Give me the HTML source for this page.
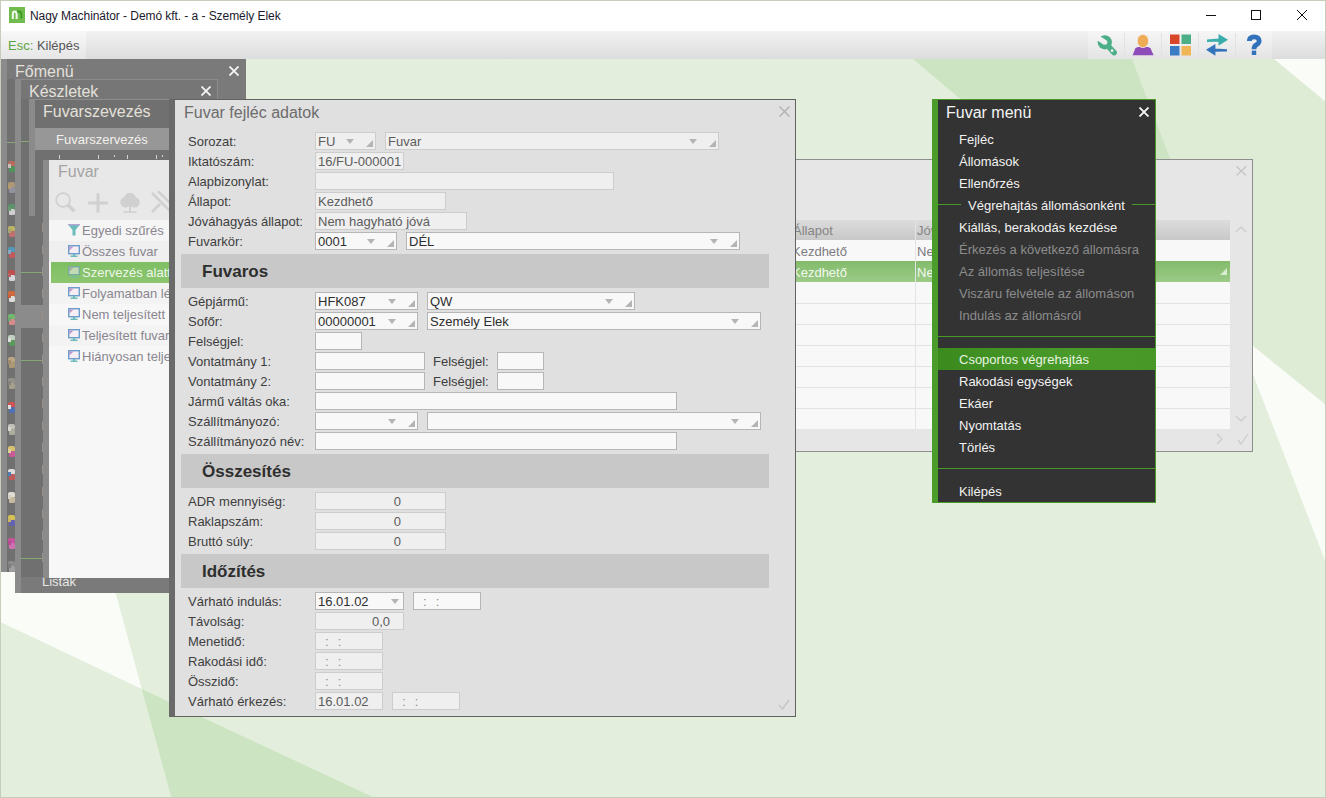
<!DOCTYPE html>
<html><head><meta charset="utf-8">
<style>
*{box-sizing:border-box;}
html,body{margin:0;padding:0;}
body{width:1326px;height:798px;position:relative;overflow:hidden;font-family:"Liberation Sans",sans-serif;background:#e2efdb;}
.a{position:absolute;}
.t{position:absolute;white-space:nowrap;line-height:1;}

.lb{position:absolute;white-space:nowrap;line-height:1;font-size:13px;color:#3e3e3e;}
.bx{position:absolute;height:18px;border:1px solid #cdcdcd;background:#efefef;color:#5c5c5c;font-size:13px;padding-left:2px;line-height:17px;white-space:nowrap;overflow:hidden;}
.en{border-color:#b6b6b6;background:#f8f8f8;color:#2e2e2e;}
.ar{position:absolute;top:6px;width:0;height:0;border-left:4.5px solid transparent;border-right:4.5px solid transparent;border-top:5px solid #b4b4b4;}
.gr{position:absolute;top:7px;width:0;height:0;border-left:7px solid transparent;border-bottom:7px solid #b4b4b4;}
.band{position:absolute;left:181px;width:588px;height:34px;background:#c8c8c8;}
.mi{position:absolute;white-space:nowrap;line-height:1;font-size:13px;}
.bt{position:absolute;white-space:nowrap;line-height:1;font-size:17px;font-weight:bold;color:#2e2e2e;}

</style></head><body>
<!-- BACKGROUND -->
<svg class="a" style="left:0;top:0" width="1326" height="798">
<rect x="0" y="0" width="1326" height="798" fill="#e3efdc"/>
<polygon points="1132,59 1326,59 1326,405 1237,333" fill="#deebd5"/>
<polygon points="913,59 1132,59 1237,333" fill="#cde4c2"/>
<polygon points="1274,59 1326,59 1326,102" fill="#fafcf8"/>
<polygon points="1237,333 1326,405 1326,563" fill="#fafcf8"/>
<polygon points="-4,154 141.8,689 0,621.7" fill="#fafcf8"/>
<polygon points="141.8,689 375,798 171.5,798" fill="#cde4c2"/>
</svg>

<!-- TITLE BAR -->
<div class="a" style="left:0;top:0;width:1326px;height:31px;background:#fff;"></div>
<div class="t" style="left:30px;top:10px;font-size:12px;color:#1a1a2e;letter-spacing:-0.06px;">Nagy Machinátor - Demó kft. - a - Személy Elek</div>

<!-- TOOLBAR -->
<div class="a" style="left:0;top:31px;width:1326px;height:28px;background:linear-gradient(#f2f2f2,#dcdcdc);"></div>
<div class="a" style="left:1px;top:31px;width:85px;height:28px;background:linear-gradient(#f8f8f8,#e6e6e6);"></div>
<div class="t" style="left:8px;top:39px;font-size:13px;color:#5aa341;">Esc:<span style="color:#555"> Kilépés</span></div>

<!-- LEFT STACK -->
<div class="a" style="left:1px;top:59px;width:245px;height:513px;background:#7a7a7a;"></div>
<div class="a" style="left:1px;top:59px;width:6px;height:513px;background:#8b8b8b;"></div>
<div class="a" style="left:7px;top:79px;width:8px;height:493px;background:#707070;"></div>
<div class="t" style="left:15px;top:64px;font-size:16px;color:#e4e0da;">Főmenü</div>
<svg class="a" style="left:229px;top:66px" width="10" height="10"><path d="M0.5 0.5L9.5 9.5M9.5 0.5L0.5 9.5" stroke="#f4f4f4" stroke-width="1.8"/></svg>
<!-- Keszletek -->
<div class="a" style="left:15px;top:79px;width:203px;height:514px;background:#767676;border-top:1px solid #8c8c8c;border-right:1px solid #8c8c8c;"></div>
<div class="a" style="left:15px;top:79px;width:6px;height:514px;background:#8b8b8b;"></div>
<div class="a" style="left:21px;top:99px;width:22px;height:478px;background:#707070;"></div>
<div class="t" style="left:29px;top:84px;font-size:16px;color:#e4e0da;">Készletek</div>
<svg class="a" style="left:201px;top:86px" width="10" height="10"><path d="M0.5 0.5L9.5 9.5M9.5 0.5L0.5 9.5" stroke="#f4f4f4" stroke-width="1.8"/></svg>
<!-- Fuvarszevezes -->
<div class="a" style="left:29px;top:99px;width:141px;height:117px;background:#707070;border-top:1px solid #8c8c8c;"></div>
<div class="a" style="left:29px;top:99px;width:6px;height:117px;background:#8b8b8b;"></div>
<div class="t" style="left:43px;top:104px;font-size:16px;color:#e4e0da;">Fuvarszevezés</div>
<div class="a" style="left:35px;top:128px;width:135px;height:22px;background:#979797;"></div>
<div class="t" style="left:56px;top:133px;font-size:13px;color:#f2f0ec;">Fuvarszervezés</div>
<div class="a" style="left:59px;top:155px;width:1px;height:4px;background:#d8d4d0;"></div><div class="a" style="left:98px;top:155px;width:1px;height:4px;background:#d8d4d0;"></div><div class="a" style="left:114px;top:155px;width:1px;height:2px;background:#d8d4d0;"></div><div class="a" style="left:127px;top:155px;width:1px;height:4px;background:#d8d4d0;"></div><div class="a" style="left:156px;top:155px;width:1px;height:4px;background:#d8d4d0;"></div><div class="a" style="left:162px;top:155px;width:1px;height:2px;background:#d8d4d0;"></div>
<!-- green lines -->
<div class="a" style="left:7px;top:142px;width:8px;height:1px;background:#86a874;"></div>
<div class="a" style="left:21px;top:141px;width:8px;height:1px;background:#86a874;"></div>
<div class="a" style="left:21px;top:272px;width:22px;height:1px;background:#86a874;"></div>
<div class="a" style="left:21px;top:360px;width:22px;height:1px;background:#86a874;"></div>
<div class="a" style="left:21px;top:558px;width:22px;height:1px;background:#86a874;"></div>
<div class="a" style="left:15px;top:305px;width:28px;height:23px;background:#8b8b8b;"></div>
<div class="a" style="left:42px;top:223px;width:1px;height:9px;background:#9a9088;"></div><div class="a" style="left:42px;top:245px;width:1px;height:9px;background:#9a9088;"></div><div class="a" style="left:42px;top:267px;width:1px;height:9px;background:#9a9088;"></div><div class="a" style="left:42px;top:289px;width:1px;height:9px;background:#9a9088;"></div><div class="a" style="left:42px;top:311px;width:1px;height:9px;background:#9a9088;"></div><div class="a" style="left:42px;top:333px;width:1px;height:9px;background:#9a9088;"></div><div class="a" style="left:42px;top:355px;width:1px;height:9px;background:#9a9088;"></div><div class="a" style="left:42px;top:377px;width:1px;height:9px;background:#9a9088;"></div><div class="a" style="left:42px;top:399px;width:1px;height:9px;background:#9a9088;"></div><div class="a" style="left:42px;top:421px;width:1px;height:9px;background:#9a9088;"></div><div class="a" style="left:42px;top:443px;width:1px;height:9px;background:#9a9088;"></div><div class="a" style="left:42px;top:465px;width:1px;height:9px;background:#9a9088;"></div><div class="a" style="left:42px;top:487px;width:1px;height:9px;background:#9a9088;"></div><div class="a" style="left:42px;top:509px;width:1px;height:9px;background:#9a9088;"></div><div class="a" style="left:42px;top:531px;width:1px;height:9px;background:#9a9088;"></div><div class="a" style="left:42px;top:553px;width:1px;height:9px;background:#9a9088;"></div>
<!-- icons strip -->
<svg class="a" style="left:7px;top:155px" width="8" height="420"><defs><filter id="bl"><feGaussianBlur stdDeviation="0.55"/></filter></defs><g filter="url(#bl)" opacity="0.85"><g transform="translate(0,5)"><rect x="1" y="1" width="7" height="6" fill="#c46a5a" rx="2"/><rect x="2" y="6" width="6" height="6" fill="#4c9a5a" rx="1.5"/><rect x="1" y="4" width="3" height="4" fill="#d8d0c8"/></g><g transform="translate(0,26)"><rect x="1" y="1" width="7" height="6" fill="#b8a078" rx="2"/><rect x="2" y="6" width="6" height="6" fill="#9a9aa8" rx="1.5"/><rect x="1" y="4" width="3" height="4" fill="#c0a070"/></g><g transform="translate(0,48)"><rect x="1" y="1" width="7" height="6" fill="#5a9a6a" rx="2"/><rect x="2" y="6" width="6" height="6" fill="#e0e0e0" rx="1.5"/><rect x="1" y="4" width="3" height="4" fill="#6aa070"/></g><g transform="translate(0,70)"><rect x="1" y="1" width="7" height="6" fill="#c8c060" rx="2"/><rect x="2" y="6" width="6" height="6" fill="#d07070" rx="1.5"/><rect x="1" y="4" width="3" height="4" fill="#b0b070"/></g><g transform="translate(0,91)"><rect x="1" y="1" width="7" height="6" fill="#50a0c8" rx="2"/><rect x="2" y="6" width="6" height="6" fill="#d05858" rx="1.5"/><rect x="1" y="4" width="3" height="4" fill="#88b0d0"/></g><g transform="translate(0,114)"><rect x="1" y="1" width="7" height="6" fill="#d04848" rx="2"/><rect x="2" y="6" width="6" height="6" fill="#e8e8f0" rx="1.5"/><rect x="1" y="4" width="3" height="4" fill="#c06060"/></g><g transform="translate(0,135)"><rect x="1" y="1" width="7" height="6" fill="#e06a38" rx="2"/><rect x="2" y="6" width="6" height="6" fill="#f0f0f0" rx="1.5"/><rect x="1" y="4" width="3" height="4" fill="#d86030"/></g><g transform="translate(0,158)"><rect x="1" y="1" width="7" height="6" fill="#70c870" rx="2"/><rect x="2" y="6" width="6" height="6" fill="#e89090" rx="1.5"/><rect x="1" y="4" width="3" height="4" fill="#70b070"/></g><g transform="translate(0,179)"><rect x="1" y="1" width="7" height="6" fill="#d0e0d0" rx="2"/><rect x="2" y="6" width="6" height="6" fill="#58a058" rx="1.5"/><rect x="1" y="4" width="3" height="4" fill="#f0f0f0"/></g><g transform="translate(0,201)"><rect x="1" y="1" width="7" height="6" fill="#c8b088" rx="2"/><rect x="2" y="6" width="6" height="6" fill="#b8a078" rx="1.5"/><rect x="1" y="4" width="3" height="4" fill="#a89070"/></g><g transform="translate(0,222)"><rect x="1" y="1" width="7" height="6" fill="#9a9a90" rx="2"/><rect x="2" y="6" width="6" height="6" fill="#b0a890" rx="1.5"/><rect x="1" y="4" width="3" height="4" fill="#888880"/></g><g transform="translate(0,246)"><rect x="1" y="1" width="7" height="6" fill="#e05050" rx="2"/><rect x="2" y="6" width="6" height="6" fill="#4a70c0" rx="1.5"/><rect x="1" y="4" width="3" height="4" fill="#f0f0f0"/></g><g transform="translate(0,268)"><rect x="1" y="1" width="7" height="6" fill="#d0d0c8" rx="2"/><rect x="2" y="6" width="6" height="6" fill="#b8b8a8" rx="1.5"/><rect x="1" y="4" width="3" height="4" fill="#e8e8e0"/></g><g transform="translate(0,290)"><rect x="1" y="1" width="7" height="6" fill="#e8d070" rx="2"/><rect x="2" y="6" width="6" height="6" fill="#d858a0" rx="1.5"/><rect x="1" y="4" width="3" height="4" fill="#f0e0a0"/></g><g transform="translate(0,313)"><rect x="1" y="1" width="7" height="6" fill="#f0f0f0" rx="2"/><rect x="2" y="6" width="6" height="6" fill="#d05858" rx="1.5"/><rect x="1" y="4" width="3" height="4" fill="#4a80c0"/></g><g transform="translate(0,336)"><rect x="1" y="1" width="7" height="6" fill="#f0f0e8" rx="2"/><rect x="2" y="6" width="6" height="6" fill="#d8c8a8" rx="1.5"/><rect x="1" y="4" width="3" height="4" fill="#e8e0d0"/></g><g transform="translate(0,359)"><rect x="1" y="1" width="7" height="6" fill="#e8d050" rx="2"/><rect x="2" y="6" width="6" height="6" fill="#6060c0" rx="1.5"/><rect x="1" y="4" width="3" height="4" fill="#e0c060"/></g><g transform="translate(0,382)"><rect x="1" y="1" width="7" height="6" fill="#d850a8" rx="2"/><rect x="2" y="6" width="6" height="6" fill="#e070c0" rx="1.5"/><rect x="1" y="4" width="3" height="4" fill="#c04898"/></g><g transform="translate(0,405)"><rect x="1" y="1" width="7" height="6" fill="#909090" rx="2"/><rect x="2" y="6" width="6" height="6" fill="#a8a8a8" rx="1.5"/><rect x="1" y="4" width="3" height="4" fill="#808080"/></g></g></svg>

<div class="a" style="left:21px;top:577px;width:148px;height:16px;background:#7a7a7a;"></div>
<div class="t" style="left:42px;top:575px;font-size:13px;color:#e8e8e8;">Listák</div>
<!-- Fuvar window -->
<div class="a" style="left:43px;top:160px;width:126px;height:418px;background:#8b8b8b;"></div>
<div class="a" style="left:49px;top:160px;width:120px;height:60px;background:#e8e8e8;"></div>
<div class="a" style="left:49px;top:220px;width:120px;height:358px;background:#f7f7f7;"></div>
<div class="t" style="left:58px;top:164px;font-size:16px;color:#a4a4a4;">Fuvar</div>
<svg class="a" style="left:55px;top:191px" width="114" height="24">
 <g fill="none" stroke="#d0d0d0">
  <circle cx="8.1" cy="9" r="6.9" stroke-width="1.7"/><path d="M13.3 14.3L19.3 20.3" stroke-width="3.6"/>
  <path d="M43 2.2V21.4M33.2 12H52.8" stroke-width="3"/>
  <path d="M97 2L116 21M103 0L116 13M97 21L105 13" stroke-width="2.6"/>
 </g>
 <g fill="#d0d0d0"><circle cx="75" cy="7.3" r="5.6"/><circle cx="70.5" cy="11.3" r="5.2"/><circle cx="79.5" cy="11.3" r="5.2"/><rect x="74" y="14" width="2" height="7"/><rect x="68.5" y="20.3" width="13" height="1.6"/></g>
</svg>
<div class="a" style="left:49px;top:220px;width:120px;height:21px;background:#f5f5f5;"></div>
<div class="a" style="left:49px;top:241px;width:120px;height:21px;background:#efefef;"></div>
<div class="a" style="left:51px;top:262px;width:118px;height:21px;background:linear-gradient(#7fbe63,#8cc670);"></div>
<div class="a" style="left:49px;top:283px;width:120px;height:21px;background:#f3f3f3;"></div>
<div class="a" style="left:49px;top:304px;width:120px;height:21px;background:#f7f7f7;"></div>
<div class="a" style="left:49px;top:325px;width:120px;height:21px;background:#f3f3f3;"></div>
<div class="t" style="left:82px;top:224px;font-size:13px;color:#8a8690;">Egyedi szűrés</div>
<div class="t" style="left:82px;top:245px;font-size:13px;color:#8a8690;">Összes fuvar</div>
<div class="t" style="left:82px;top:266px;font-size:13px;color:#eef6ea;">Szervezés alatt</div>
<div class="t" style="left:82px;top:287px;font-size:13px;color:#8a8690;">Folyamatban lévő</div>
<div class="t" style="left:82px;top:308px;font-size:13px;color:#8a8690;">Nem teljesített</div>
<div class="t" style="left:82px;top:329px;font-size:13px;color:#8a8690;">Teljesített fuvarok</div>
<div class="t" style="left:82px;top:350px;font-size:13px;color:#8a8690;">Hiányosan teljesített</div>
<svg class="a" style="left:66px;top:222px" width="16" height="140"><path d="M2 2.5H14L9.5 8V13.5H6.5V8Z" fill="#6cbcbc"/><rect x="2" y="2" width="12" height="1.3" fill="#b9a3d6"/><g transform="translate(0,22)" opacity="1"><rect x="2.7" y="1.7" width="10.6" height="8" fill="#f6eef4" stroke="#6d9dcb" stroke-width="1.4"/><path d="M3.4 2.4H7.5L3.4 6.5Z" fill="#b993c9"/><rect x="7" y="10" width="2" height="2" fill="#6cbcbc"/><rect x="4.5" y="11.5" width="7" height="1.5" fill="#6cbcbc"/></g><g transform="translate(0,43)" opacity="0.55"><rect x="2.7" y="1.7" width="10.6" height="8" fill="#f6eef4" stroke="#6d9dcb" stroke-width="1.4"/><path d="M3.4 2.4H7.5L3.4 6.5Z" fill="#b993c9"/><rect x="7" y="10" width="2" height="2" fill="#6cbcbc"/><rect x="4.5" y="11.5" width="7" height="1.5" fill="#6cbcbc"/></g><g transform="translate(0,64)" opacity="1"><rect x="2.7" y="1.7" width="10.6" height="8" fill="#f6eef4" stroke="#6d9dcb" stroke-width="1.4"/><path d="M3.4 2.4H7.5L3.4 6.5Z" fill="#b993c9"/><rect x="7" y="10" width="2" height="2" fill="#6cbcbc"/><rect x="4.5" y="11.5" width="7" height="1.5" fill="#6cbcbc"/></g><g transform="translate(0,85)" opacity="1"><rect x="2.7" y="1.7" width="10.6" height="8" fill="#f6eef4" stroke="#6d9dcb" stroke-width="1.4"/><path d="M3.4 2.4H7.5L3.4 6.5Z" fill="#b993c9"/><rect x="7" y="10" width="2" height="2" fill="#6cbcbc"/><rect x="4.5" y="11.5" width="7" height="1.5" fill="#6cbcbc"/></g><g transform="translate(0,106)" opacity="1"><rect x="2.7" y="1.7" width="10.6" height="8" fill="#f6eef4" stroke="#6d9dcb" stroke-width="1.4"/><path d="M3.4 2.4H7.5L3.4 6.5Z" fill="#b993c9"/><rect x="7" y="10" width="2" height="2" fill="#6cbcbc"/><rect x="4.5" y="11.5" width="7" height="1.5" fill="#6cbcbc"/></g><g transform="translate(0,127)" opacity="1"><rect x="2.7" y="1.7" width="10.6" height="8" fill="#f6eef4" stroke="#6d9dcb" stroke-width="1.4"/><path d="M3.4 2.4H7.5L3.4 6.5Z" fill="#b993c9"/><rect x="7" y="10" width="2" height="2" fill="#6cbcbc"/><rect x="4.5" y="11.5" width="7" height="1.5" fill="#6cbcbc"/></g></svg>


<div class="a" style="left:796px;top:159px;width:457px;height:293px;background:#e6e6e6;border:1px solid #8e8e8e;border-left:none;"></div>
<svg class="a" style="left:1236px;top:166px" width="11" height="10"><path d="M0.5 0.5L10 9.5M10 0.5L0.5 9.5" stroke="#c4c4c4" stroke-width="1.3"/></svg>
<div class="a" style="left:796px;top:220px;width:434px;height:20px;background:linear-gradient(#dcdcdc,#c8c8c8);"></div>
<div class="a" style="left:796px;top:240px;width:434px;height:189px;background:#f8f8f8;"></div>
<div class="a" style="left:796px;top:303px;width:434px;height:1px;background:#e2e2e2;"></div>
<div class="a" style="left:796px;top:324px;width:434px;height:1px;background:#e2e2e2;"></div>
<div class="a" style="left:796px;top:345px;width:434px;height:1px;background:#e2e2e2;"></div>
<div class="a" style="left:796px;top:366px;width:434px;height:1px;background:#e2e2e2;"></div>
<div class="a" style="left:796px;top:387px;width:434px;height:1px;background:#e2e2e2;"></div>
<div class="a" style="left:796px;top:408px;width:434px;height:1px;background:#e2e2e2;"></div>
<div class="a" style="left:796px;top:261px;width:434px;height:21px;background:linear-gradient(#82bb6a,#9ccb87);"></div>
<div class="a" style="left:915px;top:220px;width:1px;height:209px;background:#e4e4e4;"></div>
<div class="t" style="left:793px;top:224px;font-size:13px;color:#858585;">Állapot</div>
<div class="t" style="left:917px;top:224px;font-size:13px;color:#858585;">Jóváhagyás</div>
<div class="t" style="left:792px;top:245px;font-size:13px;color:#7c7a80;">Kezdhető</div>
<div class="t" style="left:917px;top:245px;font-size:13px;color:#7c7a80;">Nem</div>
<div class="t" style="left:792px;top:266px;font-size:13px;color:#f2f8ee;">Kezdhető</div>
<div class="t" style="left:917px;top:266px;font-size:13px;color:#f2f8ee;">Nem</div>
<div class="a" style="left:1220px;top:268px;width:0;height:0;border-left:7px solid transparent;border-bottom:7px solid #d8ecd0;"></div>
<svg class="a" style="left:1234px;top:224px" width="14" height="200"><g fill="none" stroke="#cccccc" stroke-width="1.3"><path d="M2 8L7 3L12 8"/><path d="M2 192L7 197L12 192"/></g></svg>
<svg class="a" style="left:1214px;top:432px" width="36" height="16"><g fill="none" stroke="#cccccc" stroke-width="1.3"><path d="M3 2L8 7L3 12"/><path d="M24 8L27 12L34 2"/></g></svg>

<div class="a" style="left:169px;top:99px;width:627px;height:618px;background:#e0e0e0;border:1px solid #626262;border-left:6px solid #6a6a6a;"></div>
<div class="t" style="left:184px;top:105px;font-size:16px;color:#6c6c6c;">Fuvar fejléc adatok</div>
<svg class="a" style="left:779px;top:106px" width="11" height="11"><path d="M0.5 0.5L10.5 10.5M10.5 0.5L0.5 10.5" stroke="#b0b0b0" stroke-width="1.3"/></svg>
<div class="lb" style="left:188px;top:135px;">Sorozat:</div>
<div class="bx" style="left:315px;top:132px;width:61px;">FU<div class="ar" style="left:30px"></div><div class="gr" style="left:50px"></div></div>
<div class="bx" style="left:385px;top:132px;width:334px;">Fuvar<div class="ar" style="left:303px"></div><div class="gr" style="left:323px"></div></div>
<div class="lb" style="left:188px;top:155px;">Iktatószám:</div>
<div class="bx" style="left:315px;top:152px;width:89px;">16/FU-000001</div>
<div class="lb" style="left:188px;top:175px;">Alapbizonylat:</div>
<div class="bx" style="left:315px;top:172px;width:299px;"></div>
<div class="lb" style="left:188px;top:195px;">Állapot:</div>
<div class="bx" style="left:315px;top:192px;width:131px;">Kezdhető</div>
<div class="lb" style="left:188px;top:215px;">Jóváhagyás állapot:</div>
<div class="bx" style="left:315px;top:212px;width:152px;">Nem hagyható jóvá</div>
<div class="lb" style="left:188px;top:235px;">Fuvarkör:</div>
<div class="bx en" style="left:315px;top:232px;width:82px;">0001<div class="ar" style="left:51px"></div><div class="gr" style="left:71px"></div></div>
<div class="bx en" style="left:406px;top:232px;width:334px;">DÉL<div class="ar" style="left:303px"></div><div class="gr" style="left:323px"></div></div>
<div class="band" style="top:254px;"></div>
<div class="bt" style="left:202px;top:263px;">Fuvaros</div>
<div class="lb" style="left:188px;top:295px;">Gépjármű:</div>
<div class="bx en" style="left:315px;top:292px;width:103px;">HFK087<div class="ar" style="left:72px"></div><div class="gr" style="left:92px"></div></div>
<div class="bx en" style="left:427px;top:292px;width:208px;">QW<div class="ar" style="left:177px"></div><div class="gr" style="left:197px"></div></div>
<div class="lb" style="left:188px;top:315px;">Sofőr:</div>
<div class="bx en" style="left:315px;top:312px;width:103px;">00000001<div class="ar" style="left:72px"></div><div class="gr" style="left:92px"></div></div>
<div class="bx en" style="left:427px;top:312px;width:334px;">Személy Elek<div class="ar" style="left:303px"></div><div class="gr" style="left:323px"></div></div>
<div class="lb" style="left:188px;top:335px;">Felségjel:</div>
<div class="bx en" style="left:315px;top:332px;width:47px;"></div>
<div class="lb" style="left:188px;top:355px;">Vontatmány 1:</div>
<div class="bx en" style="left:315px;top:352px;width:110px;"></div>
<div class="lb" style="left:433px;top:355px;">Felségjel:</div>
<div class="bx en" style="left:497px;top:352px;width:47px;"></div>
<div class="lb" style="left:188px;top:375px;">Vontatmány 2:</div>
<div class="bx en" style="left:315px;top:372px;width:110px;"></div>
<div class="lb" style="left:433px;top:375px;">Felségjel:</div>
<div class="bx en" style="left:497px;top:372px;width:47px;"></div>
<div class="lb" style="left:188px;top:395px;">Jármű váltás oka:</div>
<div class="bx en" style="left:315px;top:392px;width:362px;"></div>
<div class="lb" style="left:188px;top:415px;">Szállítmányozó:</div>
<div class="bx en" style="left:315px;top:412px;width:103px;"><div class="ar" style="left:72px"></div><div class="gr" style="left:92px"></div></div>
<div class="bx en" style="left:427px;top:412px;width:334px;"><div class="ar" style="left:303px"></div><div class="gr" style="left:323px"></div></div>
<div class="lb" style="left:188px;top:435px;">Szállítmányozó név:</div>
<div class="bx en" style="left:315px;top:432px;width:362px;"></div>
<div class="band" style="top:454px;"></div>
<div class="bt" style="left:202px;top:463px;">Összesítés</div>
<div class="lb" style="left:188px;top:495px;">ADR mennyiség:</div>
<div class="bx" style="left:315px;top:492px;width:131px;text-align:right;padding-right:44px;">0</div>
<div class="lb" style="left:188px;top:515px;">Raklapszám:</div>
<div class="bx" style="left:315px;top:512px;width:131px;text-align:right;padding-right:44px;">0</div>
<div class="lb" style="left:188px;top:535px;">Bruttó súly:</div>
<div class="bx" style="left:315px;top:532px;width:131px;text-align:right;padding-right:44px;">0</div>
<div class="band" style="top:554px;"></div>
<div class="bt" style="left:202px;top:563px;">Időzítés</div>
<div class="lb" style="left:188px;top:595px;">Várható indulás:</div>
<div class="bx en" style="left:315px;top:592px;width:89px;">16.01.02<div class="ar" style="left:75px"></div></div>
<div class="bx en" style="left:413px;top:592px;width:68px;"><span style="color:#8c8c8c;margin-left:7px">:</span><span style="color:#8c8c8c;margin-left:9px">:</span></div>
<div class="lb" style="left:188px;top:615px;">Távolság:</div>
<div class="bx" style="left:315px;top:612px;width:89px;text-align:right;padding-right:13px;">0,0</div>
<div class="lb" style="left:188px;top:635px;">Menetidő:</div>
<div class="bx" style="left:315px;top:632px;width:68px;"><span style="color:#8c8c8c;margin-left:7px">:</span><span style="color:#8c8c8c;margin-left:9px">:</span></div>
<div class="lb" style="left:188px;top:655px;">Rakodási idő:</div>
<div class="bx" style="left:315px;top:652px;width:68px;"><span style="color:#8c8c8c;margin-left:7px">:</span><span style="color:#8c8c8c;margin-left:9px">:</span></div>
<div class="lb" style="left:188px;top:675px;">Összidő:</div>
<div class="bx" style="left:315px;top:672px;width:68px;"><span style="color:#8c8c8c;margin-left:7px">:</span><span style="color:#8c8c8c;margin-left:9px">:</span></div>
<div class="lb" style="left:188px;top:695px;">Várható érkezés:</div>
<div class="bx" style="left:315px;top:692px;width:68px;">16.01.02</div>
<div class="bx" style="left:392px;top:692px;width:68px;"><span style="color:#8c8c8c;margin-left:7px">:</span><span style="color:#8c8c8c;margin-left:9px">:</span></div>
<svg class="a" style="left:778px;top:699px" width="12" height="11"><path d="M1 6L4.5 10L11 1" fill="none" stroke="#c4c4c4" stroke-width="1.3"/></svg>

<div class="a" style="left:932px;top:99px;width:224px;height:404px;background:#333333;border:1px solid #4a9a2a;border-left:6px solid #4c9c2c;"></div>
<div class="t" style="left:946px;top:105px;font-size:16px;color:#f4f4f4;">Fuvar menü</div>
<svg class="a" style="left:1139px;top:107px" width="10" height="10"><path d="M0.5 0.5L9.5 9.5M9.5 0.5L0.5 9.5" stroke="#f8f8f8" stroke-width="1.8"/></svg>
<div class="a" style="left:938px;top:348px;width:217px;height:22px;background:linear-gradient(90deg,#3a8a1e,#4a9a2a 60%,#489828);"></div>
<div class="a" style="left:938px;top:336px;width:217px;height:1px;background:#4a9a2a;"></div>
<div class="a" style="left:938px;top:468px;width:217px;height:1px;background:#4a9a2a;"></div>
<div class="a" style="left:938px;top:204px;width:23px;height:1px;background:#4a9a2a;"></div>
<div class="a" style="left:1132px;top:204px;width:23px;height:1px;background:#4a9a2a;"></div>
<div class="mi" style="left:959px;top:133px;color:#f2f2f2;">Fejléc</div>
<div class="mi" style="left:959px;top:155px;color:#f2f2f2;">Állomások</div>
<div class="mi" style="left:959px;top:177px;color:#f2f2f2;">Ellenőrzés</div>
<div class="mi" style="left:959px;top:221px;color:#f2f2f2;">Kiállás, berakodás kezdése</div>
<div class="mi" style="left:959px;top:243px;color:#8c8c8c;">Érkezés a következő állomásra</div>
<div class="mi" style="left:959px;top:265px;color:#8c8c8c;">Az állomás teljesítése</div>
<div class="mi" style="left:959px;top:287px;color:#8c8c8c;">Viszáru felvétele az állomáson</div>
<div class="mi" style="left:959px;top:309px;color:#8c8c8c;">Indulás az állomásról</div>
<div class="mi" style="left:959px;top:353px;color:#e8f4e0;">Csoportos végrehajtás</div>
<div class="mi" style="left:959px;top:375px;color:#f2f2f2;">Rakodási egységek</div>
<div class="mi" style="left:959px;top:397px;color:#f2f2f2;">Ekáer</div>
<div class="mi" style="left:959px;top:419px;color:#f2f2f2;">Nyomtatás</div>
<div class="mi" style="left:959px;top:441px;color:#f2f2f2;">Törlés</div>
<div class="mi" style="left:959px;top:485px;color:#f2f2f2;">Kilépés</div>
<div class="mi" style="left:968px;top:199px;color:#f2f2f2;">Végrehajtás állomásonként</div>

<div class="a" style="left:1088px;top:31px;width:184px;height:28px;background:linear-gradient(#f6f6f6,#e4e4e4);"></div>
<div class="a" style="left:1124px;top:33px;width:1px;height:24px;background:#e2e2e2;"></div>
<div class="a" style="left:1161px;top:33px;width:1px;height:24px;background:#e2e2e2;"></div>
<div class="a" style="left:1198px;top:33px;width:1px;height:24px;background:#e2e2e2;"></div>
<div class="a" style="left:1235px;top:33px;width:1px;height:24px;background:#e2e2e2;"></div>
<svg class="a" style="left:1088px;top:31px" width="184" height="28">
<defs><mask id="wm" maskUnits="userSpaceOnUse" x="0" y="0" width="184" height="28"><rect x="0" y="0" width="184" height="28" fill="#fff"/><circle cx="16.8" cy="11.3" r="2.5" fill="#000"/><path d="M16.8 11.3L7.5 5.2" stroke="#000" stroke-width="5"/></mask></defs>
<g mask="url(#wm)" fill="#4caf88"><circle cx="16.8" cy="11.3" r="7.1"/><path d="M16.8 11.3L26.1 21.6" stroke="#4caf88" stroke-width="5.6" stroke-linecap="round"/></g>
<circle cx="24.1" cy="19.7" r="1.35" fill="#f4f4f4"/>
<path d="M44.6 24.3L47.3 17.6Q48.2 16.1 50.3 16.1H59.6Q61.7 16.1 62.6 17.6L65.6 24.3Z" fill="#8e4cb8"/>
<ellipse cx="54.9" cy="10" rx="5.7" ry="6.6" fill="#eeac56" stroke="#f2eef2" stroke-width="0.8"/>
<g transform="translate(82,3.5)">
 <rect x="0" y="0" width="9.5" height="9.5" fill="#d9472b"/>
 <rect x="11.5" y="0" width="9.5" height="9.5" fill="#4caf86"/>
 <rect x="0" y="11.5" width="9.5" height="9.5" fill="#3a7cc4"/>
 <rect x="11.5" y="11.5" width="9.5" height="9.5" fill="#f0b556"/>
</g>
<path d="M119 8.4L131 7.6L131 10.4L119 11Z M130.5 3L140 8.8L130.5 14.8Z" fill="#3aacaa"/>
<path d="M118 18.8L127.4 12.9L127.4 24.7Z M127 17.6L139 18.2L139 20.6L127 20.8Z" fill="#3474bc"/>
<path d="M161.3 10 C161.3 7.2 163.4 5.9 166.2 5.9 C169.1 5.9 171.2 7.4 171.2 10 C171.2 12.4 169.2 13.2 167.8 14.2 C166.4 15.2 166 16 166 18.2" fill="none" stroke="#3272ba" stroke-width="4.8"/>
<rect x="163.8" y="19.6" width="4.4" height="4.4" fill="#3272ba"/>
</svg>
<svg class="a" style="left:1200px;top:5px" width="115" height="22"><g fill="none" stroke="#111" stroke-width="1"><path d="M6 10.5H16"/><rect x="51.5" y="5.5" width="9" height="9"/><path d="M97 5L107 15M107 5L97 15"/></g></svg>
<svg class="a" style="left:9px;top:7px" width="16" height="16"><rect width="16" height="16" fill="#70bc4e"/><path d="M7.6 7C7.6 5.3 8.6 4.4 10 4.4C11.4 4.4 12.3 5.3 12.3 7V11.5" fill="none" stroke="#3f9a22" stroke-width="2"/><path d="M3.8 12V7C3.8 5.3 4.6 4.4 5.7 4.4C6.8 4.4 7.6 5.3 7.6 7V12" fill="none" stroke="#f2fbef" stroke-width="2"/></svg>

<!-- WINDOW BORDER -->
<div class="a" style="left:0;top:0;width:1326px;height:798px;border:1px solid #c4ceb8;"></div>
</body></html>
